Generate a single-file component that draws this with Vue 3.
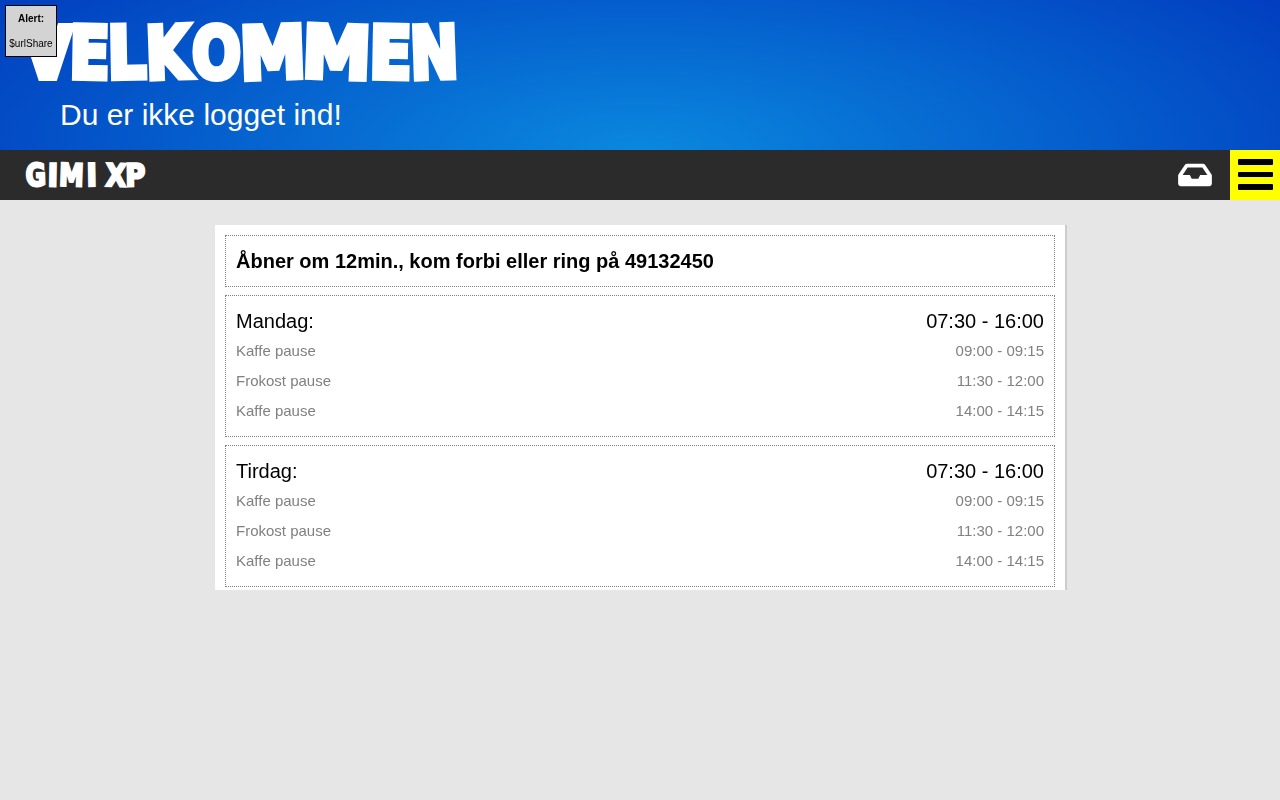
<template>
  <div class="page">
    <div class="alert">
      <b class="alert-text">Alert:</b>
      <span class="alert-text">$urlShare</span>
    </div>
    <header class="hero">
      <h1 class="title">
        <span
          v-for="(l, i) in titleLetters"
          :key="i"
          class="slot"
          :style="{ width: l.w + 'px' }"
          ><span class="glyph" :style="glyphStyle(l)">{{ l.ch }}</span></span
        >
      </h1>
      <p class="sub">Du er ikke logget ind!</p>
    </header>
    <nav class="bar">
      <div class="logo">
        <span
          v-for="(l, i) in logoLetters"
          :key="i"
          class="slot"
          :style="{ width: l.w + 'px' }"
          ><span class="glyph" :style="glyphStyle(l)">{{ l.ch }}</span></span
        >
      </div>
      <div class="bar-right">
        <svg class="inbox" viewBox="0 0 576 512" width="34" height="30">
          <path
            fill="#fff"
            d="M567.938 243.908L462.25 85.374A48.003 48.003 0 0 0 422.311 64H153.689a48 48 0 0 0-39.938 21.374L8.062 243.908A47.994 47.994 0 0 0 0 270.533V400c0 26.51 21.49 48 48 48h480c26.51 0 48-21.49 48-48V270.533a47.994 47.994 0 0 0-8.062-26.625zM162.252 128h251.497l85.333 128H376l-32 64H232l-32-64H76.918l85.334-128z"
          />
        </svg>
        <button class="menu" type="button">
          <i></i>
          <i></i>
          <i></i>
        </button>
      </div>
    </nav>
    <main class="card">
      <section class="box">
        <h2 class="notice">Åbner om 12min., kom forbi eller ring på 49132450</h2>
      </section>
      <section v-for="day in days" :key="day.name" class="box">
        <div class="row day">
          <span>{{ day.name }}:</span>
          <span>{{ day.time }}</span>
        </div>
        <div v-for="(p, i) in breaks" :key="i" class="row pause">
          <span>{{ p.name }}</span>
          <span>{{ p.time }}</span>
        </div>
      </section>
    </main>
  </div>
</template>

<script setup>
// w = slot width in px, sx = horizontal squeeze, rot = little tilt of the letter
const titleLetters = [
  { ch: "V", w: 45, sx: 0.88, rot: 0 },
  { ch: "E", w: 39, sx: 0.82, rot: 1 },
  { ch: "L", w: 36, sx: 0.84, rot: -1 },
  { ch: "K", w: 46, sx: 0.8, rot: -2 },
  { ch: "O", w: 51, sx: 0.8, rot: 0 },
  { ch: "M", w: 62, sx: 0.92, rot: -2 },
  { ch: "M", w: 66, sx: 0.96, rot: 2 },
  { ch: "E", w: 41, sx: 0.86, rot: 1 },
  { ch: "N", w: 46, sx: 0.8, rot: -2 },
];

const logoLetters = [
  { ch: "G", w: 22, sx: 0.8, rot: -2 },
  { ch: "I", w: 11, sx: 0.9, rot: 1 },
  { ch: "M", w: 27, sx: 0.8, rot: 2 },
  { ch: "I", w: 13, sx: 0.9, rot: -1 },
  { ch: " ", w: 7, sx: 1, rot: 0 },
  { ch: "X", w: 21, sx: 0.85, rot: 2 },
  { ch: "P", w: 19, sx: 0.88, rot: -1 },
];

const glyphStyle = (l) => ({
  transform: "rotate(" + l.rot + "deg) scaleX(" + l.sx + ")",
});

const days = [
  { name: "Mandag", time: "07:30 - 16:00" },
  { name: "Tirdag", time: "07:30 - 16:00" },
];

const breaks = [
  { name: "Kaffe pause", time: "09:00 - 09:15" },
  { name: "Frokost pause", time: "11:30 - 12:00" },
  { name: "Kaffe pause", time: "14:00 - 14:15" },
];
</script>

<style>
html,
body {
  margin: 0;
  background: #e6e6e6;
}
</style>

<style scoped>
.page {
  min-height: 800px;
  background: #e6e6e6;
  font-family: "Liberation Sans", Arial, sans-serif;
  color: #000;
  position: relative;
}

.alert {
  position: absolute;
  top: 5px;
  left: 5px;
  z-index: 2;
  width: 50px;
  height: 43px;
  padding-top: 7px;
  border: 1px solid #000;
  background: #d3d3d3;
  font-size: 10px;
  line-height: 12px;
  display: flex;
  flex-direction: column;
  align-items: center;
  gap: 13px;
}

.alert-text {
  will-change: opacity;
}

.hero {
  height: 150px;
  overflow: hidden;
  background: radial-gradient(ellipse 1000px 330px at 50% 100%, #0a88de 0%, #0033bb 90%);
}

.title {
  margin: 0;
  padding: 17px 0 0 25px;
  height: 72px;
  display: flex;
  font-family: "DejaVu Sans", sans-serif;
  font-size: 72px;
  line-height: 72px;
  font-weight: 700;
  color: #fff;
  -webkit-text-stroke: 6px #fff;
}

.slot {
  display: flex;
  justify-content: center;
}

.glyph {
  display: block;
  flex-shrink: 0;
  white-space: pre;
}

.sub {
  margin: 8px 0 0 60px;
  font-size: 30px;
  line-height: 36px;
  color: #fff;
}

.bar {
  height: 50px;
  background: #2b2b2b;
  display: flex;
  justify-content: space-between;
}

.logo {
  display: flex;
  align-items: center;
  padding-left: 25px;
  font-family: "DejaVu Sans", sans-serif;
  font-size: 31px;
  line-height: 48px;
  font-weight: 700;
  color: #fff;
  -webkit-text-stroke: 2.500px #fff;
}

.bar-right {
  display: flex;
  align-items: center;
  gap: 18px;
}

.inbox {
  display: block;
}

.menu {
  width: 50px;
  height: 50px;
  border: 0;
  padding: 9.300px 7px 10px 8px;
  background: #ffff00;
  display: flex;
  flex-direction: column;
  justify-content: space-between;
}

.menu i {
  display: block;
  height: 5.700px;
  background: #000;
  border-radius: 1px;
}

.card {
  box-sizing: border-box;
  width: 852px;
  height: 365px;
  margin: 25px 0 0 215px;
  padding: 10px 10px 3px;
  background: #fff;
  border-right: 2px solid #ccc;
}

.box {
  border: 1px dotted #808080;
  padding: 10px;
  margin-bottom: 8px;
  will-change: opacity;
}

.notice {
  margin: 0;
  font-size: 20px;
  line-height: 30px;
  font-weight: 700;
}

.row {
  display: flex;
  justify-content: space-between;
  height: 30px;
  line-height: 30px;
}

.day {
  font-size: 20px;
}

.pause {
  font-size: 15px;
  color: #808080;
}
</style>
